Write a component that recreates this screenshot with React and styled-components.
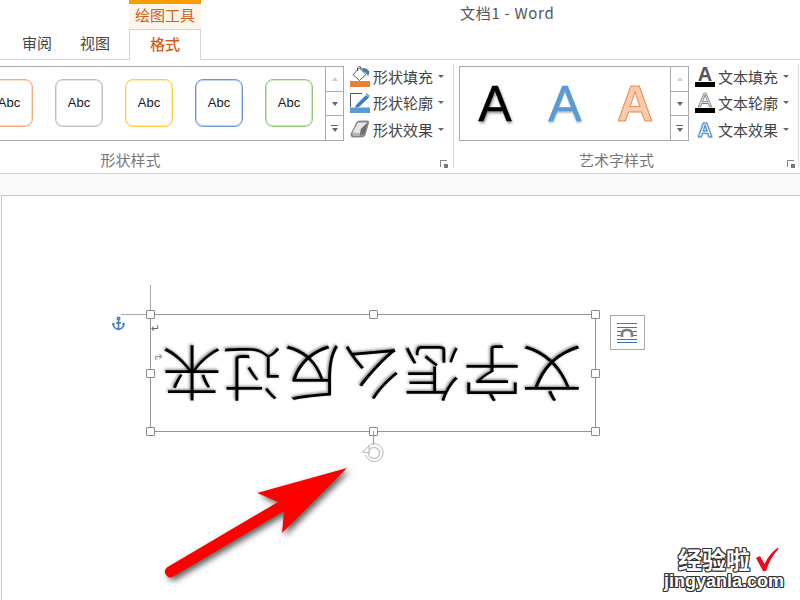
import React from "react";
import styled, { createGlobalStyle } from "styled-components";
import { Anchor } from "lucide-react";

const cjk = `"Noto Sans CJK SC", "Noto Sans", sans-serif`;

const Global = createGlobalStyle`
  html, body { margin: 0; padding: 0; background: #fff; }
  body { font-family: ${cjk}; }
`;

const swatches = ["#f5ab80", "#bdbdbd", "#fdcf4a", "#6f97d6", "#93c677"];

const handles = [
  [0, 0], [50, 0], [100, 0],
  [0, 50], [100, 50],
  [0, 100], [50, 100], [100, 100],
];

function PaintIcon() {
  return (
    <svg width="20" height="21" viewBox="0 0 20 21">
      <path d="M3 8.5 L9.5 2 L16 8.5 L9.5 14.5 Z" fill="#fff" stroke="#5a5a5a" strokeWidth="1" />
      <path d="M7.5 5 V1.8 Q8.5 0 10.5 0.8 L11.5 4" fill="none" stroke="#5a5a5a" strokeWidth="1" />
      <path d="M12 2.2 Q17 1.5 19.5 6 L18 10.5 Q16.5 6 13 5.5 Z" fill="#3f7fbf" />
      <rect x="0" y="15" width="20" height="6" fill="#ed7d31" />
    </svg>
  );
}

function OutlineIcon() {
  return (
    <svg width="20" height="21" viewBox="0 0 20 21">
      <path d="M12 1.5 H0.5 V15" fill="none" stroke="#555" strokeWidth="1" />
      <path d="M6 13 L16 3 L19 5.5 L9 15 L5 16 Z" fill="#3f7fbf" />
      <path d="M16.5 1 L20 4 L19 5.2 L15.8 2.3 Z" fill="#6aa3d8" />
      <rect x="0" y="15.5" width="20" height="5.5" fill="#5b9bd5" />
    </svg>
  );
}

function EffectIcon() {
  return (
    <svg width="20" height="21" viewBox="0 0 20 21">
      <path d="M1 15 L7 3 Q8 2 10 2 L18 2 Q19 2 18.5 4 L15 16 Q14.5 18 12 18 L3 18 Q0.5 18 1 15 Z" fill="#8c8c8c" stroke="#777" strokeWidth="0.8" />
      <path d="M2.5 13.5 L8 3.5 L17.5 3.5 L11 10 L10 14.5 Z" fill="#e6e6e6" />
      <path d="M11 10 L17.5 3.5 L14.5 14.5 L10 16 Z" fill="#6f6f6f" />
      <path d="M2 14 H10 V17 H3 Z" fill="#b5b5b5" />
    </svg>
  );
}

function WrapIcon() {
  return (
    <svg width="21" height="21" viewBox="0 0 21 21">
      <g stroke="#3f78b5" strokeWidth="1">
        <path d="M0 1.5 H20 M0 5.5 H20 M0 17.5 H20 M0 20.5 H20" />
        <path d="M0 9.5 H4 M16 9.5 H20 M0 13.5 H4 M16 13.5 H20" />
      </g>
      <path d="M5 15 V12 Q5 8 10 8 Q15 8 15 12 V15" fill="none" stroke="#7f7f7f" strokeWidth="2.6" />
    </svg>
  );
}

function RotateIcon() {
  return (
    <svg width="24" height="22" viewBox="0 0 24 22">
      <path d="M7 4 A9 9 0 1 1 4.5 13" fill="none" stroke="#b5b5b5" strokeWidth="1" />
      <circle cx="13" cy="11" r="5.5" fill="none" stroke="#c4c4c4" strokeWidth="1.4" />
      <path d="M1.5 10 L8 4 L8 11 Z" fill="#fff" stroke="#b5b5b5" strokeWidth="1" />
    </svg>
  );
}

function CheckMark() {
  return (
    <svg width="24" height="25" viewBox="0 0 24 25">
      <path d="M1 11 L5 9 L9.5 17 Q14 7 23 0.5 L23.5 2 Q15 11 11 24 L8 24 Z" fill="#f5061c" />
    </svg>
  );
}

function BigArrow() {
  return (
    <ArrowSvg width="200" height="130" viewBox="0 0 200 130">
      <path
        d="M187 8 L97 33 L118 42 L7.2 107.3 A5.5 5.5 0 0 0 12.8 116.7 L124 51 L122 73 Z"
        fill="#ff0000"
      />
    </ArrowSvg>
  );
}

function Command({ icon, label }) {
  return (
    <CommandRow>
      <CommandIcon>{icon}</CommandIcon>
      <span>{label}</span>
      <Caret />
    </CommandRow>
  );
}

function ScrollColumn() {
  return (
    <ScrollCol>
      <ScrollBtn $disabled>
        <Tri $up $disabled />
      </ScrollBtn>
      <ScrollBtn>
        <Tri />
      </ScrollBtn>
      <ScrollBtn>
        <MoreBar />
        <Tri />
      </ScrollBtn>
    </ScrollCol>
  );
}

function App() {
  return (
    <Window>
      <Global />
      <TopBar>
        <Tab>审阅</Tab>
        <Tab>视图</Tab>
        <ContextTabs>
          <ContextLabel>绘图工具</ContextLabel>
          <ActiveTab>格式</ActiveTab>
        </ContextTabs>
        <Title>文档1 - Word</Title>
      </TopBar>

      <Ribbon>
        <ShapeGroup>
          <GroupBody>
            <Gallery>
              <SwatchList>
                {swatches.map((c) => (
                  <Swatch key={c} $color={c}>Abc</Swatch>
                ))}
              </SwatchList>
              <ScrollColumn />
            </Gallery>
            <Commands>
              <Command icon={<PaintIcon />} label="形状填充" />
              <Command icon={<OutlineIcon />} label="形状轮廓" />
              <Command icon={<EffectIcon />} label="形状效果" />
            </Commands>
          </GroupBody>
          <ShapeFooter>
            <GroupLabel>形状样式</GroupLabel>
            <Launcher />
          </ShapeFooter>
        </ShapeGroup>

        <TextGroup>
          <GroupBody>
            <Gallery>
              <WordArtList>
                <WordArt $kind="black">A</WordArt>
                <WordArt $kind="blue">A</WordArt>
                <WordArt $kind="orange">A</WordArt>
              </WordArtList>
              <ScrollColumn />
            </Gallery>
            <Commands>
              <Command icon={<SmallA $kind="fill">A</SmallA>} label="文本填充" />
              <Command icon={<SmallA $kind="outline">A</SmallA>} label="文本轮廓" />
              <Command icon={<SmallA $kind="effect">A</SmallA>} label="文本效果" />
            </Commands>
          </GroupBody>
          <TextFooter>
            <GroupLabel>艺术字样式</GroupLabel>
            <Launcher />
          </TextFooter>
        </TextGroup>
      </Ribbon>

      <DocArea>
        <Page>
          <CropMark $vertical />
          <CropMark />
          <AnchorMark>
            <Anchor size={15} strokeWidth={2.6} color="#4a7ebb" />
          </AnchorMark>

          <TextBox>
            {handles.map(([x, y]) => (
              <Handle key={`${x}-${y}`} $x={x} $y={y} />
            ))}
            <ReturnMark>↵</ReturnMark>
            <FlipReturn>↵</FlipReturn>
            <FlippedText>文字怎么反过来</FlippedText>
            <RotateStem />
            <RotateHandle>
              <RotateIcon />
            </RotateHandle>
          </TextBox>

          <LayoutButton>
            <WrapIcon />
          </LayoutButton>

          <BigArrow />

          <Watermark>
            <WatermarkTop>
              <WatermarkCn>经验啦</WatermarkCn>
              <CheckMark />
            </WatermarkTop>
            <WatermarkEn>jingyanla.com</WatermarkEn>
          </Watermark>
        </Page>
      </DocArea>
    </Window>
  );
}

export default App;

const Window = styled.div`
  width: 800px;
  height: 600px;
  overflow: hidden;
  display: flex;
  flex-direction: column;
  background: #fff;
  font-family: ${cjk};
  color: #444;
`;

const TopBar = styled.div`
  height: 60px;
  box-sizing: border-box;
  padding-left: 8px;
  display: flex;
  border-bottom: 1px solid #d4d4d4;
`;

const Tab = styled.div`
  width: 58px;
  height: 31px;
  margin-top: 29px;
  text-align: center;
  font-size: 15px;
  line-height: 28px;
  color: #444;
`;

const ContextTabs = styled.div`
  width: 72px;
  height: 60px;
  flex: none;
  margin-left: 5px;
  display: flex;
  flex-direction: column;
  position: relative;
  z-index: 1;
`;

const ContextLabel = styled.div`
  height: 29px;
  flex: none;
  box-sizing: border-box;
  border-top: 4px solid #fb9b00;
  background: #fdf5ea;
  text-align: center;
  font-size: 15px;
  line-height: 22px;
  color: #d2601a;
`;

const ActiveTab = styled.div`
  height: 31px;
  flex: none;
  box-sizing: border-box;
  border: 1px solid #d4d4d4;
  border-bottom: 0;
  background: #fff;
  text-align: center;
  font-size: 15px;
  font-weight: 500;
  line-height: 27px;
  color: #d2601a;
`;

const Title = styled.div`
  margin-left: 259px;
  font-size: 15px;
  letter-spacing: 0.7px;
  line-height: 26px;
  color: #555;
`;

const Ribbon = styled.div`
  height: 114px;
  box-sizing: border-box;
  padding-top: 4px;
  display: flex;
  align-items: flex-start;
  border-bottom: 1px solid #d4d4d4;
`;

const Group = styled.div`
  height: 104px;
  box-sizing: border-box;
  flex: none;
  display: flex;
  flex-direction: column;
  border-right: 1px solid #dcdcdc;
`;

const ShapeGroup = styled(Group)`
  width: 625px;
  margin-left: -171px;
  padding-right: 10px;
`;

const TextGroup = styled(Group)`
  width: 345px;
  padding: 0 10px 0 5px;
`;

const GroupBody = styled.div`
  padding-top: 2px;
  display: flex;
  justify-content: flex-end;
  align-items: flex-start;
`;

const Gallery = styled.div`
  height: 75px;
  box-sizing: border-box;
  display: flex;
  border: 1px solid #ababab;
  background: #fff;
`;

const SwatchList = styled.div`
  display: flex;
  align-items: center;
  gap: 22px;
  padding: 0 12px 2px 10px;
`;

const Swatch = styled.div`
  width: 48px;
  height: 48px;
  box-sizing: border-box;
  padding-bottom: 1px;
  display: flex;
  align-items: center;
  justify-content: center;
  border: 1px solid ${(p) => p.$color};
  border-radius: 8px;
  box-shadow: inset 0 0 0 1px ${(p) => p.$color}66;
  background: #fff;
  font-family: "Liberation Sans", sans-serif;
  font-size: 13px;
  color: #1a1a1a;
`;

const WordArtList = styled.div`
  width: 210px;
  display: flex;
  align-items: center;
`;

const WordArt = styled.div`
  width: 70px;
  text-align: center;
  font-family: "Liberation Sans", sans-serif;
  font-size: 50px;
  line-height: 72px;
  ${(p) => p.$kind === "black" && `
    color: #000;
    -webkit-text-stroke: 0.4px #000;
    text-shadow: 1px 2px 3px rgba(0, 0, 0, 0.5);
  `}
  ${(p) => p.$kind === "blue" && `
    color: #5b9bd5;
    -webkit-text-stroke: 0.4px #5b9bd5;
    text-shadow: 0 2px 2px rgba(120, 120, 120, 0.45);
  `}
  ${(p) => p.$kind === "orange" && `
    color: #f8cbad;
    font-weight: 700;
    -webkit-text-stroke: 1px #ed8b4e;
  `}
`;

const ScrollCol = styled.div`
  width: 17px;
  flex: none;
  display: flex;
  flex-direction: column;
  border-left: 1px solid #ababab;
`;

const ScrollBtn = styled.div`
  flex: 1;
  display: flex;
  flex-direction: column;
  align-items: center;
  justify-content: center;
  gap: 2px;
  & + & {
    border-top: 1px solid #ababab;
  }
`;

const Tri = styled.div`
  width: 0;
  height: 0;
  border-left: 3.5px solid transparent;
  border-right: 3.5px solid transparent;
  ${(p) =>
    p.$up
      ? `border-bottom: 4px solid ${p.$disabled ? "#cfcfcf" : "#666"};`
      : `border-top: 4px solid #666;`}
`;

const MoreBar = styled.div`
  width: 7px;
  height: 1px;
  background: #666;
`;

const Commands = styled.div`
  width: 93px;
  margin: -3px 0 0 6px;
  display: grid;
  grid-auto-rows: 26.5px;
  flex: none;
`;

const CommandRow = styled.div`
  display: flex;
  align-items: center;
  font-size: 15px;
  color: #444;
  white-space: nowrap;
`;

const CommandIcon = styled.div`
  width: 20px;
  height: 21px;
  margin-right: 3px;
  flex: none;
  display: flex;
  align-items: center;
  justify-content: center;
`;

const Caret = styled.div`
  width: 0;
  height: 0;
  margin-left: 5px;
  border-left: 3px solid transparent;
  border-right: 3px solid transparent;
  border-top: 3px solid #666;
`;

const SmallA = styled.div`
  position: relative;
  width: 20px;
  height: 21px;
  text-align: center;
  font-family: "Liberation Sans", sans-serif;
  font-size: 20px;
  line-height: 17px;
  ${(p) => p.$kind === "fill" && `
    color: #555;
    font-weight: 700;
  `}
  ${(p) => p.$kind === "outline" && `
    color: #fff;
    -webkit-text-stroke: 0.7px #666;
  `}
  ${(p) => p.$kind === "effect" && `
    color: #fff;
    font-weight: 700;
    line-height: 22px;
    -webkit-text-stroke: 1px #3f82c8;
    text-shadow: 0 0 3px #9cc6ee;
  `}
  ${(p) => p.$kind !== "effect" && `
    &::after {
      content: "";
      position: absolute;
      left: 0;
      right: 0;
      bottom: 0;
      height: 5px;
      background: #000;
    }
  `}
`;

const GroupFooter = styled.div`
  flex: 1;
  display: flex;
  align-items: flex-end;
`;

const ShapeFooter = styled(GroupFooter)`
  margin-right: -8px;
`;

const TextFooter = styled(GroupFooter)`
  margin: 0 -10px 0 -5px;
`;

const GroupLabel = styled.div`
  flex: 1;
  text-align: center;
  font-size: 15px;
  line-height: 16px;
  color: #777;
`;

const Launcher = styled.div`
  width: 7px;
  height: 7px;
  box-sizing: border-box;
  margin: 0 4px 1px 8px;
  border-left: 1px solid #888;
  border-top: 1px solid #888;
  position: relative;
  &::after {
    content: "";
    position: absolute;
    right: -1px;
    bottom: -1px;
    width: 4px;
    height: 4px;
    background: #777;
  }
`;

const DocArea = styled.div`
  flex: 1;
  padding: 21px 0 0 1px;
  display: flex;
  background: #fafafa;
`;

const Page = styled.div`
  flex: 1;
  position: relative;
  background: #fff;
  border-left: 1px solid #c6c6c6;
  border-top: 1px solid #c6c6c6;
`;

const CropMark = styled.div`
  position: absolute;
  background: #a8a8a8;
  ${(p) =>
    p.$vertical
      ? `left: 148px; top: 89px; width: 1px; height: 29px;`
      : `left: 119px; top: 118px; width: 29px; height: 1px;`}
`;

const AnchorMark = styled.div`
  position: absolute;
  left: 109px;
  top: 120px;
  width: 15px;
  height: 15px;
  display: flex;
`;

const TextBox = styled.div`
  position: absolute;
  left: 148px;
  top: 118px;
  width: 446px;
  height: 118px;
  box-sizing: border-box;
  border: 1px solid #949494;
  display: flex;
  align-items: center;
  justify-content: center;
`;

const Handle = styled.div`
  position: absolute;
  left: calc(${(p) => p.$x}% + ${(p) => p.$x / 100}px);
  top: calc(${(p) => p.$y}% + ${(p) => p.$y / 100}px);
  width: 9px;
  height: 9px;
  box-sizing: border-box;
  transform: translate(-5px, -5px);
  border: 1px solid #8a8a8a;
  border-radius: 1px;
  background: #fff;
`;

const ReturnMark = styled.div`
  position: absolute;
  left: 0;
  top: 7px;
  font-family: "DejaVu Sans", sans-serif;
  font-size: 11px;
  line-height: 14px;
  color: #666;
`;

const FlipReturn = styled.div`
  position: absolute;
  left: 2px;
  top: 34px;
  transform: rotate(180deg);
  font-family: "DejaVu Sans", sans-serif;
  font-size: 11px;
  line-height: 14px;
  color: #999;
  text-shadow: 0 0 2px #bbb;
`;

const FlippedText = styled.div`
  transform: rotate(180deg);
  margin: 6px 2px 0 0;
  font-family: ${cjk};
  font-size: 60px;
  font-weight: 300;
  line-height: 70px;
  white-space: nowrap;
  color: #000;
  text-shadow: 1px 1px 3px rgba(0, 0, 0, 0.5);
`;

const RotateStem = styled.div`
  position: absolute;
  left: 222px;
  top: 116px;
  width: 1px;
  height: 14px;
  background: #999;
`;

const RotateHandle = styled.div`
  position: absolute;
  left: 210px;
  top: 127px;
  width: 24px;
  height: 22px;
  display: flex;
`;

const LayoutButton = styled.div`
  position: absolute;
  left: 608px;
  top: 119px;
  width: 35px;
  height: 35px;
  box-sizing: border-box;
  display: flex;
  align-items: center;
  justify-content: center;
  border: 1px solid #aaa;
  background: #fff;
`;

const ArrowSvg = styled.svg`
  position: absolute;
  left: 158px;
  top: 264px;
  overflow: visible;
  filter: drop-shadow(3px 3px 3px rgba(0, 0, 0, 0.65));
`;

const Watermark = styled.div`
  position: absolute;
  left: 659px;
  top: 350px;
  width: 126px;
  display: flex;
  flex-direction: column;
  align-items: center;
`;

const WatermarkTop = styled.div`
  display: flex;
  align-items: center;
  gap: 5px;
  height: 26px;
  margin-left: 9px;
`;

const outline = `
  1px 0 0 #333, -1px 0 0 #333, 0 1px 0 #333, 0 -1px 0 #333,
  1px 1px 0 #333, -1px 1px 0 #333, 1px -1px 0 #333, -1px -1px 0 #333
`;

const WatermarkCn = styled.div`
  font-family: ${cjk};
  font-size: 24px;
  font-weight: 700;
  line-height: 26px;
  color: #fff;
  text-shadow: ${outline};
`;

const WatermarkEn = styled.div`
  font-family: "Liberation Sans", sans-serif;
  font-size: 18px;
  font-weight: 700;
  line-height: 19px;
  color: #fff;
  text-shadow: ${outline};
`;
